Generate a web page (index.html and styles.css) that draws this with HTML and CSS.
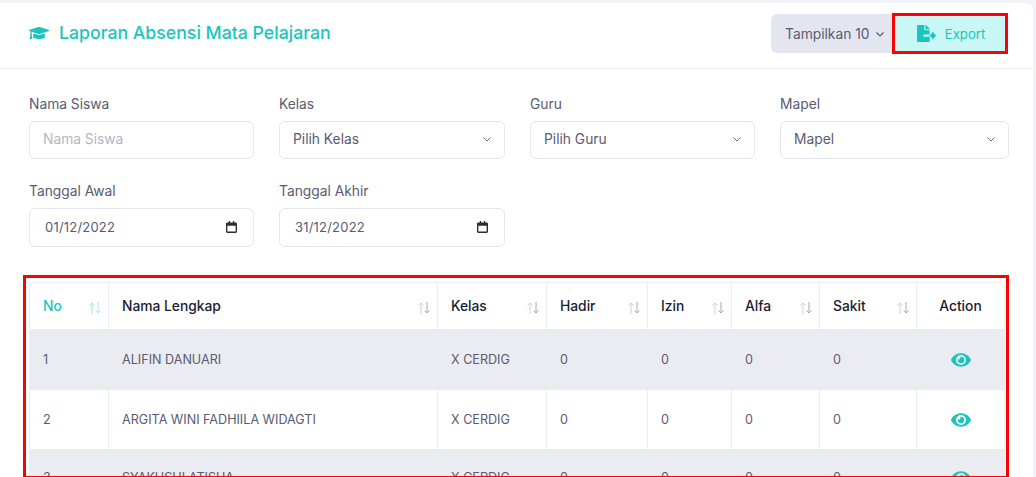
FILE: index.html
```html
<!DOCTYPE html>
<html lang="id">
<head>
<meta charset="utf-8">
<title>Laporan Absensi Mata Pelajaran</title>
<link rel="stylesheet" href="styles.css">
</head>
<body>
<main class="card">
  <header class="card-head">
    <h1 class="title">
      <svg class="title-icon" viewBox="0 0 640 512" aria-hidden="true"><path d="M622.34 153.2 343.4 67.5c-15.2-4.67-31.6-4.67-46.79 0L17.66 153.2c-23.54 7.23-23.54 38.36 0 45.59l48.63 14.94c-10.67 13.19-17.23 29.28-17.88 46.9C38.78 266.15 32 276.11 32 288c0 10.78 5.68 19.85 13.86 25.65L20.33 428.53C18.11 438.52 25.71 448 35.94 448h56.11c10.24 0 17.84-9.48 15.62-19.47L82.14 313.65C90.32 307.85 96 298.78 96 288c0-11.57-6.47-21.25-15.66-26.87.76-15.02 8.44-28.3 20.69-36.72L296.6 284.5c9.06 2.78 26.44 6.25 46.79 0l278.95-85.7c23.55-7.24 23.55-38.36 0-45.6zM352.79 315.09c-28.53 8.76-52.84 3.92-65.59 0l-145.02-44.55L128 384c0 35.35 85.96 64 192 64s192-28.65 192-64l-14.18-113.47-145.03 44.56z"/></svg>
      Laporan Absensi Mata Pelajaran
    </h1>
    <div class="actions">
      <button class="btn-show" type="button">Tampilkan 10
        <svg class="chev" viewBox="0 0 12 12" aria-hidden="true"><path d="M2.5 4.5 6 8l3.5-3.5"/></svg>
      </button>
      <button class="btn-export" type="button">
        <svg class="export-icon" viewBox="0 0 576 512" aria-hidden="true"><path d="M384 121.9c0-6.3-2.5-12.4-7-16.9L279.1 7c-4.5-4.5-10.6-7-17-7H256v128h128v-6.1zM571 308l-95.7-96.4c-10.1-10.1-27.4-3-27.4 11.3V288h-64v64h64v65.2c0 14.3 17.3 21.4 27.4 11.3L571 332c6.6-6.6 6.6-17.4 0-24zm-379 28v-32c0-8.8 7.2-16 16-16h176V160H248c-13.2 0-24-10.8-24-24V0H24C10.7 0 0 10.7 0 24v464c0 13.3 10.7 24 24 24h336c13.3 0 24-10.7 24-24V352H208c-8.8 0-16-7.2-16-16z"/></svg>
        Export
      </button>
    </div>
  </header>

  <section class="filters">
    <div class="field"><label class="label">Nama Siswa</label><div class="control placeholder">Nama Siswa</div></div>
    <div class="field"><label class="label">Kelas</label><div class="control">Pilih Kelas<svg class="chev" viewBox="0 0 12 12" aria-hidden="true"><path d="M2.5 4.5 6 8l3.5-3.5"/></svg></div></div>
    <div class="field"><label class="label">Guru</label><div class="control">Pilih Guru<svg class="chev" viewBox="0 0 12 12" aria-hidden="true"><path d="M2.5 4.5 6 8l3.5-3.5"/></svg></div></div>
    <div class="field"><label class="label">Mapel</label><div class="control">Mapel<svg class="chev" viewBox="0 0 12 12" aria-hidden="true"><path d="M2.5 4.5 6 8l3.5-3.5"/></svg></div></div>
    <div class="field"><label class="label">Tanggal Awal</label><div class="control date"><span class="date-text">01/12/2022</span><svg class="cal" viewBox="0 0 12 13" aria-hidden="true"><path d="M3 0h1.5v1.5h3V0H9v1.5h1.5A1.5 1.5 0 0 1 12 3v8.500A1.500 1.500 0 0 1 10.500 13h-9A1.500 1.500 0 0 1 0 11.500V3a1.500 1.500 0 0 1 1.500-1.500H3zM1.500 5v6.500h9V5z"/></svg></div></div>
    <div class="field"><label class="label">Tanggal Akhir</label><div class="control date"><span class="date-text">31/12/2022</span><svg class="cal" viewBox="0 0 12 13" aria-hidden="true"><path d="M3 0h1.5v1.5h3V0H9v1.5h1.5A1.5 1.5 0 0 1 12 3v8.500A1.500 1.500 0 0 1 10.500 13h-9A1.500 1.500 0 0 1 0 11.500V3a1.500 1.500 0 0 1 1.500-1.500H3zM1.500 5v6.500h9V5z"/></svg></div></div>
  </section>

  <section class="table-mark">
    <table class="report">
      <colgroup>
        <col class="c-no"><col class="c-name"><col class="c-kelas"><col class="c-hadir"><col class="c-izin"><col class="c-alfa"><col class="c-sakit"><col class="c-action">
      </colgroup>
      <thead>
        <tr>
          <th class="active"><div class="th-in">No<svg class="sort" viewBox="0 0 14 14" aria-hidden="true"><path class="up" d="M4 13V2M1.500 4.500 4 2l2.500 2.500"/><path class="down" d="M10 1v11M7.500 9.500 10 12l2.500-2.500"/></svg></div></th>
          <th><div class="th-in">Nama Lengkap<svg class="sort" viewBox="0 0 14 14" aria-hidden="true"><path class="up" d="M4 13V2M1.500 4.500 4 2l2.500 2.500"/><path class="down" d="M10 1v11M7.500 9.500 10 12l2.500-2.500"/></svg></div></th>
          <th><div class="th-in">Kelas<svg class="sort" viewBox="0 0 14 14" aria-hidden="true"><path class="up" d="M4 13V2M1.500 4.500 4 2l2.500 2.500"/><path class="down" d="M10 1v11M7.500 9.500 10 12l2.500-2.500"/></svg></div></th>
          <th><div class="th-in">Hadir<svg class="sort" viewBox="0 0 14 14" aria-hidden="true"><path class="up" d="M4 13V2M1.500 4.500 4 2l2.500 2.500"/><path class="down" d="M10 1v11M7.500 9.500 10 12l2.500-2.500"/></svg></div></th>
          <th><div class="th-in">Izin<svg class="sort" viewBox="0 0 14 14" aria-hidden="true"><path class="up" d="M4 13V2M1.500 4.500 4 2l2.500 2.500"/><path class="down" d="M10 1v11M7.500 9.500 10 12l2.500-2.500"/></svg></div></th>
          <th><div class="th-in">Alfa<svg class="sort" viewBox="0 0 14 14" aria-hidden="true"><path class="up" d="M4 13V2M1.500 4.500 4 2l2.500 2.500"/><path class="down" d="M10 1v11M7.500 9.500 10 12l2.500-2.500"/></svg></div></th>
          <th><div class="th-in">Sakit<svg class="sort" viewBox="0 0 14 14" aria-hidden="true"><path class="up" d="M4 13V2M1.500 4.500 4 2l2.500 2.500"/><path class="down" d="M10 1v11M7.500 9.500 10 12l2.500-2.500"/></svg></div></th>
          <th class="center">Action</th>
        </tr>
      </thead>
      <tbody>
        <tr class="odd first"><td>1</td><td>ALIFIN DANUARI</td><td>X CERDIG</td><td>0</td><td>0</td><td>0</td><td>0</td><td class="center"><svg class="eye" viewBox="0 0 576 512" aria-hidden="true"><path d="M572.520 241.400C518.290 135.590 410.930 64 288 64S57.680 135.640 3.480 241.410a32.350 32.350 0 0 0 0 29.190C57.710 376.410 165.070 448 288 448s230.320-71.640 284.520-177.410a32.350 32.350 0 0 0 0-29.190zM288 400a144 144 0 1 1 144-144 143.930 143.930 0 0 1-144 144zm0-240a95.310 95.310 0 0 0-25.310 3.790 47.850 47.850 0 0 1-66.900 66.900A95.780 95.780 0 1 0 288 160z"/></svg></td></tr>
        <tr class="second"><td>2</td><td>ARGITA WINI FADHIILA WIDAGTI</td><td>X CERDIG</td><td>0</td><td>0</td><td>0</td><td>0</td><td class="center"><svg class="eye" viewBox="0 0 576 512" aria-hidden="true"><path d="M572.520 241.400C518.290 135.590 410.930 64 288 64S57.680 135.640 3.480 241.410a32.350 32.350 0 0 0 0 29.190C57.710 376.410 165.070 448 288 448s230.320-71.640 284.520-177.410a32.350 32.350 0 0 0 0-29.190zM288 400a144 144 0 1 1 144-144 143.930 143.930 0 0 1-144 144zm0-240a95.310 95.310 0 0 0-25.310 3.790 47.850 47.850 0 0 1-66.900 66.900A95.780 95.780 0 1 0 288 160z"/></svg></td></tr>
        <tr class="odd third"><td>3</td><td>SYAKUSHLATISHA</td><td>X CERDIG</td><td>0</td><td>0</td><td>0</td><td>0</td><td class="center"><svg class="eye" viewBox="0 0 576 512" aria-hidden="true"><path d="M572.520 241.400C518.290 135.590 410.930 64 288 64S57.680 135.640 3.480 241.410a32.350 32.350 0 0 0 0 29.190C57.710 376.410 165.070 448 288 448s230.320-71.640 284.520-177.410a32.350 32.350 0 0 0 0-29.190zM288 400a144 144 0 1 1 144-144 143.930 143.930 0 0 1-144 144zm0-240a95.310 95.310 0 0 0-25.310 3.790 47.850 47.850 0 0 1-66.900 66.900A95.780 95.780 0 1 0 288 160z"/></svg></td></tr>
      </tbody>
    </table>
  </section>
</main>
</body>
</html>
```
FILE: styles.css
```css
* { box-sizing: border-box; }
html, body { height: 100%; }
body {
  margin: 0;
  height: 477px;
  overflow: hidden;
  background: #f2f2f8;
  font-family: "Inter", "Liberation Sans", sans-serif;
  font-size: 13.8px;
  color: #5a5a72;
}
.card {
  width: 1033px;
  height: 477px;
  margin-top: 3px;
  background: #fff;
  border-radius: 0 8px 0 0;
  overflow: hidden;
}
.card-head {
  height: 66px;
  padding: 10px 25px 0 29px;
  border-bottom: 1px solid #ebebf3;
  display: flex;
  justify-content: space-between;
  align-items: flex-start;
}
.title {
  margin: 0;
  padding-top: 9px;
  font-size: 17.7px;
  font-weight: 450;
  color: #1bc5bd;
  display: flex;
  align-items: center;
  gap: 10px;
  line-height: 22px;
}
.title-icon { width: 20px; height: 16px; fill: #1bc5bd; }
.actions { display: flex; }
.btn-show {
  width: 121px;
  height: 39px;
  margin-top: 1px;
  border: 0;
  border-radius: 6px 0 0 6px;
  background: #e4e6ef;
  color: #5a5a72;
  font: inherit;
  display: flex;
  align-items: center;
  padding: 0 0 0 14px;
  gap: 4px;
}
.btn-show .chev { stroke: #5a5a72; stroke-width: 1.2; }
.btn-export {
  width: 116px;
  height: 41px;
  border: 3px solid #f00;
  background: #c9f7f5;
  color: #1bc5bd;
  font: inherit;
  font-size: 13.2px;
  display: flex;
  align-items: center;
  justify-content: center;
  gap: 9px;
  padding: 0 0 0 2px;
}
.export-icon { width: 19px; height: 17px; fill: #1bc5bd; }
.chev { width: 12px; height: 12px; fill: none; stroke: #6a6a80; stroke-width: 1; }
.filters {
  width: 980px;
  margin: 25px 0 0 29px;
  display: grid;
  grid-template-columns: 225px 226px 225px 229px;
  column-gap: 25px;
  row-gap: 22px;
}
.label { display: block; line-height: 20px; margin-bottom: 7px; }
.control {
  height: 38px;
  border: 1px solid #e4e6ef;
  border-radius: 6px;
  padding: 0 11px 2px 13px;
  display: flex;
  align-items: center;
  justify-content: space-between;
  background: #fff;
}
.placeholder { color: #b5b5c3; }
.date { height: 39px; padding: 0 16px 1px 15px; }
.date-text { font-size: 13px; letter-spacing: 0.2px; }
.cal { width: 11px; height: 12px; fill: #2d2d2d; }
.table-mark {
  width: 986px;
  height: 204px;
  margin: 28px 0 0 23px;
  padding: 4px 0 0 3px;
  border: 3px solid #f00;
  overflow: hidden;
  background: #fff;
}
.report {
  width: 976px;
  border-collapse: separate;
  border-spacing: 0;
  table-layout: fixed;
  border: 1px solid #ebedf3;
  border-bottom: 0;
  border-radius: 6px 6px 0 0;
}
.c-no { width: 79px; } .c-name { width: 329px; } .c-kelas { width: 109px; } .c-hadir { width: 101px; }
.c-izin { width: 84px; } .c-alfa { width: 88px; } .c-sakit { width: 97px; } .c-action { width: 87px; }
th {
  height: 46px;
  padding: 0 13px;
  text-align: left;
  font-weight: 450;
  color: #181c32;
  border-right: 1px solid #ebedf3;
}
th:last-child, td:last-child { border-right: 0; }
.th-in { display: flex; justify-content: space-between; align-items: center; }
th.active { color: #1bc5bd; }
.sort { width: 14px; height: 14px; margin: 3px -7px 0 0; fill: none; stroke-width: 1; }
.sort .up { stroke: #cfd1da; }
.sort .down { stroke: #a8aab5; }
.active .sort .up { stroke: #8fe6e1; }
.active .sort .down { stroke: #a5ebe7; }
td {
  height: 60px;
  padding: 0 13px;
  font-size: 12.6px;
  border-right: 1px solid #ebedf3;
}
.first td { height: 61px; }
.second td { height: 59px; }
.third td { padding-bottom: 3px; }
.odd td { background: #ebecf1; border-right-color: #ebecf1; }
.center { text-align: center; }
.eye { width: 20px; height: 18px; fill: #1bc5bd; display: inline-block; vertical-align: middle; }
```
